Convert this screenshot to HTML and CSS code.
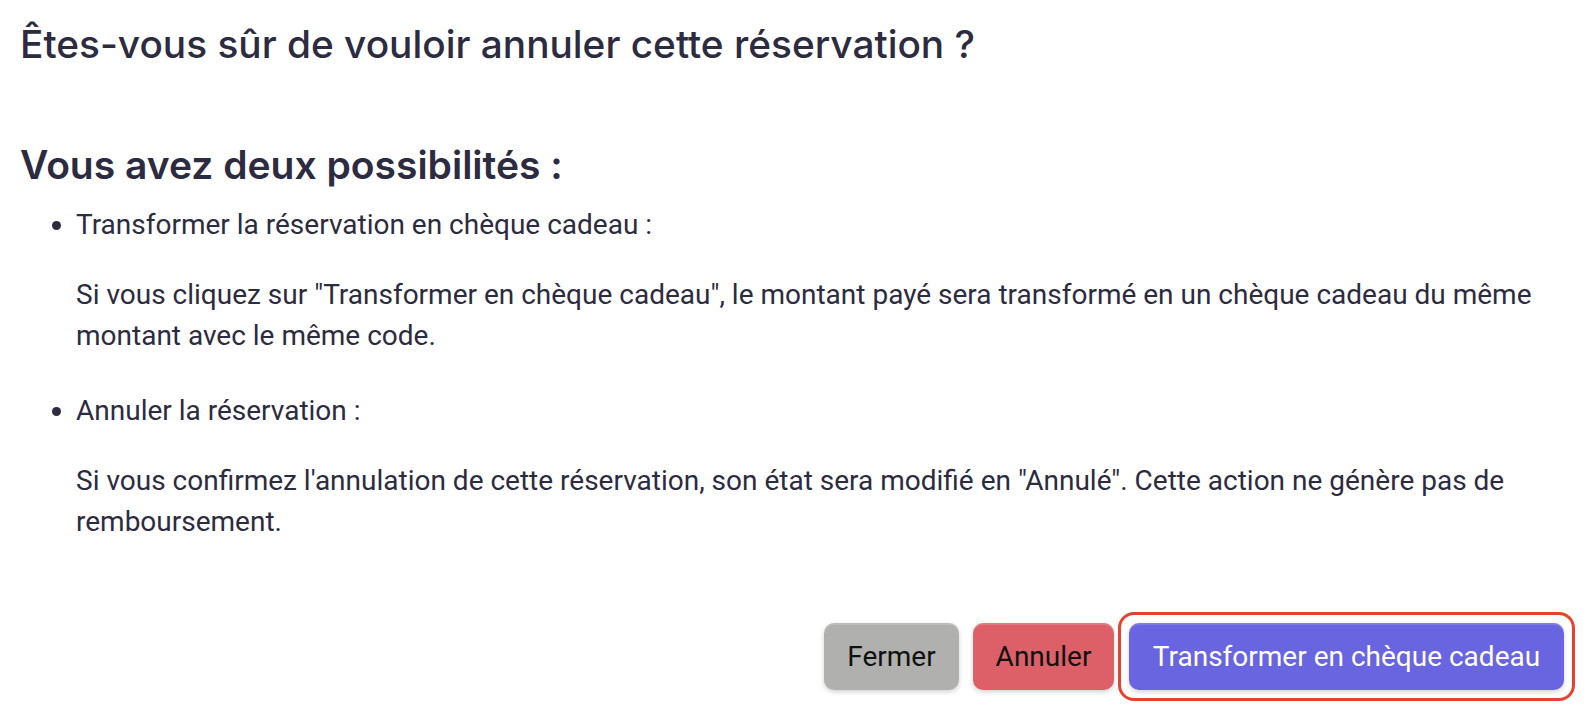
FILE: index.html
```html
<!DOCTYPE html>
<html lang="fr">
<head>
<meta charset="utf-8">
<link rel="stylesheet" href="styles.css">
</head>
<body>
<div class="modal">
  <h1 class="title">Êtes-vous sûr de vouloir annuler cette réservation ?</h1>
  <h2 class="subtitle">Vous avez deux possibilités :</h2>
  <ul class="options">
    <li>
      <p class="opt-label">Transformer la réservation en chèque cadeau :</p>
      <p class="opt-desc">Si vous cliquez sur "Transformer en chèque cadeau", le montant payé sera transformé en un chèque cadeau du même montant avec le même code.</p>
    </li>
    <li>
      <p class="opt-label">Annuler la réservation :</p>
      <p class="opt-desc">Si vous confirmez l'annulation de cette réservation, son état sera modifié en "Annulé". Cette action ne génère pas de remboursement.</p>
    </li>
  </ul>
  <div class="actions">
    <button class="btn btn-close">Fermer</button>
    <button class="btn btn-cancel">Annuler</button>
    <span class="highlight"><button class="btn btn-primary">Transformer en chèque cadeau</button></span>
  </div>
</div>
</body>
</html>
```
FILE: styles.css
```css
* { box-sizing: border-box; }
html, body { margin: 0; padding: 0; background: #fff; }
body {
  font-family: Roboto, "Liberation Sans", sans-serif;
  color: #2d2b40;
}
.modal {
  padding: 19px 11px 0 20px;
}
.title {
  margin: 0;
  font-family: Inter, Roboto, sans-serif;
  font-size: 38.8px;
  font-weight: 500;
  line-height: 50px;
}
.subtitle {
  margin: 72px 0 0 0;
  font-family: Inter, Roboto, sans-serif;
  font-size: 39px;
  font-weight: 600;
  line-height: 48px;
}
.options {
  margin: 15px 0 0 0;
  padding-left: 56px;
  font-size: 28px;
  line-height: 41px;
}
.options li { margin: 0; }
.opt-label { margin: 0; }
.opt-desc { margin: 29px 0 34px 0; }
.actions {
  display: flex;
  justify-content: flex-end;
  align-items: center;
  gap: 14px;
  margin-top: 70px;
}
.btn {
  font-family: Roboto, "Liberation Sans", sans-serif;
  font-size: 28px;
  border: none;
  border-radius: 10px;
  height: 67px;
  padding: 0 20px;
  color: #111;
  box-shadow: 0 2px 5px rgba(0,0,0,0.18), inset 0 2px 0 rgba(255,255,255,0.15);
}
.btn-close { background: #b0b1af; width: 135px; }
.btn-cancel { background: #dd6068; width: 141px; }
.btn-primary { background: #6965e0; color: #fff; width: 435px; }
.highlight {
  display: inline-flex;
  padding: 8px;
  border: 3px solid #e8412e;
  border-radius: 16px;
  margin-left: -10px;
}
```
